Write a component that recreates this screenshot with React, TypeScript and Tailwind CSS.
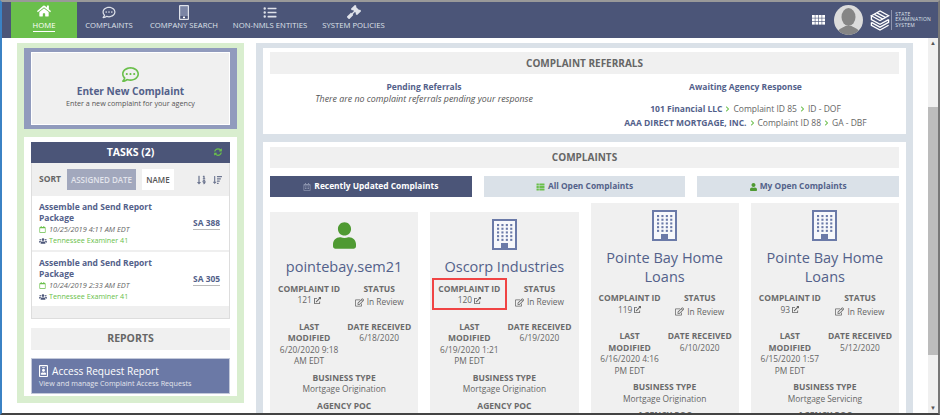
import { FaHome, FaRegCommentDots, FaListUl, FaGavel, FaSyncAlt, FaUsers, FaRegCalendar, FaRegCalendarAlt, FaUser, FaExternalLinkAlt, FaRegEdit, FaChevronRight, FaSortAmountDown, FaSortNumericDown, FaRegIdBadge, FaThList } from 'react-icons/fa';

const navItems = [
  { label: 'COMPLAINTS', icon: <FaRegCommentDots className="w-[14px] h-[13px]" />, w: 'w-[64px]' },
  { label: 'COMPANY SEARCH', icon: <TabletIcon />, w: 'w-[86px]' },
  { label: 'NON-NMLS ENTITIES', icon: <FaListUl className="w-[14px] h-[13px]" />, w: 'w-[86px]' },
  { label: 'SYSTEM POLICIES', icon: <FaGavel className="w-[14px] h-[14px]" />, w: 'w-[81px]' },
];

const complaints = [
  { name: 'pointebay.sem21', person: true, id: '121', modified: '6/20/2020 9:18 AM EDT', received: '6/18/2020', type: 'Mortgage Origination', boxed: false },
  { name: 'Oscorp Industries', person: false, id: '120', modified: '6/19/2020 1:21 PM EDT', received: '6/19/2020', type: 'Mortgage Origination', boxed: true },
  { name: 'Pointe Bay Home Loans', person: false, id: '119', modified: '6/16/2020 4:16 PM EDT', received: '6/10/2020', type: 'Mortgage Origination', boxed: false },
  { name: 'Pointe Bay Home Loans', person: false, id: '93', modified: '6/15/2020 1:57 PM EDT', received: '5/12/2020', type: 'Mortgage Servicing', boxed: false },
];

function TabletIcon() {
  return (
    <svg viewBox="0 0 10 15" className="w-[10px] h-[15px]">
      <rect x="0" y="0" width="10" height="15" rx="1" fill="#dfe2ea" />
      <rect x="1.2" y="1.2" width="7.6" height="9.8" fill="#7b85a5" />
      <rect x="1.2" y="11" width="7.6" height="2.8" fill="#4b5578" />
      <rect x="4" y="11.6" width="2" height="1.6" fill="#fff" />
    </svg>
  );
}

function GridIcon() {
  const cells = [];
  for (let r = 0; r < 3; r++) {
    for (let c = 0; c < 4; c++) {
      cells.push(<rect key={`${r}-${c}`} x={c * 3.4} y={r * 3.4} width="2.8" height="2.8" fill="#fff" />);
    }
  }
  return (
    <svg viewBox="0 0 13 10" className="w-[13px] h-[10px]">
      {cells}
    </svg>
  );
}

function Avatar() {
  return (
    <svg viewBox="0 0 29 30" className="w-[29px] h-[30px]">
      <defs>
        <clipPath id="avatar-clip">
          <ellipse cx="14.5" cy="15" rx="14.5" ry="15" />
        </clipPath>
      </defs>
      <g clipPath="url(#avatar-clip)">
        <rect width="29" height="30" fill="#dcdcdc" />
        <ellipse cx="14.5" cy="12" rx="7" ry="9" fill="#858585" />
        <path d="M3 30c0-6 5-7 8.500-9h6c3.500 2 8.500 3 8.500 9z" fill="#858585" />
      </g>
    </svg>
  );
}

function SesLogo() {
  return (
    <svg viewBox="0 0 20 22" className="w-[20px] h-[21px]" fill="none" stroke="#fff" strokeWidth="1.4">
      <path d="M1 6l9-5 9 5-9 5z" />
      <path d="M4 4.500l9 5M7 3l9 5" />
      <path d="M1 6v4l9 5 9-5" />
      <path d="M1 13l9 5 9-5v-3" />
      <path d="M1 13v3l9 5 9-5" />
    </svg>
  );
}

function BuildingIcon() {
  const dots = [];
  for (let r = 0; r < 5; r++) {
    for (let c = 0; c < 4; c++) {
      dots.push(<rect key={`${r}-${c}`} x={5 + c * 4.4} y={5 + r * 3.7} width="2.100" height="2.100" fill="#6b7aa8" />);
    }
  }
  return (
    <svg viewBox="0 0 25 31" className="w-[25px] h-[31px]">
      <rect x="1" y="1" width="23" height="29" fill="#f7f8fb" stroke="#6b7aa8" strokeWidth="2" />
      {dots}
      <rect x="9" y="24" width="7" height="6" fill="#6b7aa8" />
    </svg>
  );
}

function Field({ label, children }: { label: string; children: React.ReactNode }) {
  return (
    <div className="text-center text-[8.4px] leading-[11.5px] text-[#666]">
      <div className="font-bold text-[8.5px] text-[#6b6b6b]">{label}</div>
      {children}
    </div>
  );
}

function ComplaintCard({ c }: { c: (typeof complaints)[number] }) {
  return (
    <div className="flex-1 basis-0 min-w-0 bg-[#f0f0f0] pt-[7px] pb-10 px-[7px] text-center">
      <div className="flex justify-center h-[32px] items-start">
        {c.person ? <FaUser className="w-[23px] h-[27px] mt-[3px] text-[#4f9a32]" /> : <BuildingIcon />}
      </div>
      <div className="mt-[7px] text-[14.5px] leading-[18.5px] text-[#53618a]">{c.name}</div>
      <div className="grid grid-cols-2 gap-x-[6px] mt-[6px]">
        <div className="relative">
          {c.boxed && <div className="absolute -left-[5px] -top-[5px] w-[75px] h-[32px] border-2 border-[#f04444]" />}
          <Field label="COMPLAINT ID">
            <div className="flex items-center justify-center gap-[2px]">
              {c.id}
              <FaExternalLinkAlt className="w-[7px] h-[7px]" />
            </div>
          </Field>
        </div>
        <Field label="STATUS">
          <div className="mt-[2px] flex items-center justify-center gap-[3px]">
            <FaRegEdit className="w-[9px] h-[9px]" />
            In Review
          </div>
        </Field>
      </div>
      <div className="grid grid-cols-2 gap-x-[6px] mt-[13px]">
        <Field label="LAST MODIFIED">{c.modified}</Field>
        <Field label="DATE RECEIVED">{c.received}</Field>
      </div>
      <div className="mt-[5px]">
        <Field label="BUSINESS TYPE">{c.type}</Field>
      </div>
      <div className="mt-[5px]">
        <Field label="AGENCY POC">Tennessee Examiner 41</Field>
      </div>
    </div>
  );
}

function TaskRow({ date, code }: { date: string; code: string }) {
  return (
    <div className="bg-white flex items-center h-[54px] pl-[7px] pr-[9px] mb-[2px]">
      <div className="flex-1 pt-[1px]">
        <div className="text-[8.5px] leading-[11.5px] font-bold text-[#53618a] w-[125px]">Assemble and Send Report Package</div>
        <div className="flex items-center gap-[3px] text-[7.4px] leading-[11.5px] italic text-[#666]">
          <FaRegCalendar className="w-[7px] h-[7px] text-[#6abf4b]" />
          {date}
        </div>
        <div className="flex items-center gap-[2px] text-[7.2px] leading-[11px] text-[#6abf4b]">
          <FaUsers className="w-[8px] h-[8px] text-[#4b5578]" />
          Tennessee Examiner 41
        </div>
      </div>
      <span className="text-[8.4px] font-bold text-[#53618a] border-b border-[#bbb] leading-[12px]">{code}</span>
    </div>
  );
}

export default function App() {
  return (
    <div className="w-[940px] h-[415px] overflow-hidden flex flex-col bg-white border-t-[2px] border-b-[2px] border-t-[#999] border-b-[#444] border-l-[2px] border-l-[#3b82c4] border-r-[2px] border-r-[#777] font-['Open_Sans',sans-serif]">
      <header className="h-[36px] shrink-0 bg-[#4b5578] flex items-stretch pl-[9px] text-white">
        <div className="w-[66px] bg-[#6abf4b] flex flex-col items-center pt-[2px]">
          <FaHome className="w-[14px] h-[14px]" />
          <span className="text-[7.7px] leading-[10px] mt-[2px] border-b border-white pb-[1px]">HOME</span>
        </div>
        {navItems.map((n) => (
          <div key={n.label} className={`${n.w} flex flex-col items-center pt-[2px] text-[#dfe2ea]`}>
            <div className="h-[16px] flex items-center">{n.icon}</div>
            <span className="text-[7.7px] leading-[10px] whitespace-nowrap">{n.label}</span>
          </div>
        ))}
        <div className="flex-1" />
        <div className="flex items-center">
          <GridIcon />
          <div className="ml-[9px]"><Avatar /></div>
          <div className="ml-[7px]"><SesLogo /></div>
          <div className="ml-[1px] border-l border-[#8d94ad] pl-[3px] py-[2px] text-[5px] leading-[5.5px] text-[#dfe2ea] tracking-[0.2px] mr-[7px]">
            STATE<br />EXAMINATION<br />SYSTEM
          </div>
        </div>
      </header>

      <div className="flex-1 min-h-0 flex">
        <div className="flex-1 min-w-0 overflow-hidden flex items-start gap-[12px] pl-[15px] pt-[5px]">
          <aside className="w-[227px] shrink-0 h-[360px] bg-[#d9eecf] p-[7px] pt-[5px] flex flex-col gap-[8px]">
            <div className="h-[81px] bg-[#919bbd] py-[4px] px-[7px] shrink-0">
              <div className="h-full bg-[#f0f0f0] border border-white flex flex-col items-center pt-[13px]">
                <FaRegCommentDots className="w-[19px] h-[17px] text-[#6abf4b]" />
                <div className="text-[10.100px] leading-[14px] font-bold text-[#53618a] mt-[1px]">Enter New Complaint</div>
                <div className="text-[7.200px] leading-[11px] text-[#555]">Enter a new complaint for your agency</div>
              </div>
            </div>
            <div className="flex-1 bg-white px-[7px] pt-[5px]">
              <div className="relative h-[21px] bg-[#4b5578] text-white text-[10.5px] font-bold flex items-center justify-center">
                TASKS (2)
                <FaSyncAlt className="absolute right-[8px] top-[6px] w-[8px] h-[8px] text-[#6abf4b]" />
              </div>
              <div className="bg-[#efefef] border-x border-b border-[#ddd]">
                <div className="h-[33px] flex items-center pl-[7px] pr-[7px] text-[8.5px] font-bold text-[#666]">
                  <span>SORT</span>
                  <span className="ml-[6px] h-[21px] w-[69px] bg-[#a2a8bd] text-[#e3e5ec] font-semibold flex items-center justify-center whitespace-nowrap text-[8px]">ASSIGNED DATE</span>
                  <span className="ml-[6px] h-[21px] w-[32px] bg-white text-[#555] font-semibold flex items-center justify-center text-[8px]">NAME</span>
                  <FaSortNumericDown className="ml-auto w-[9px] h-[10px] text-[#6d7690]" />
                  <FaSortAmountDown className="ml-[7px] w-[9px] h-[10px] text-[#6d7690]" />
                </div>
                <TaskRow date="10/25/2019 4:11 AM EDT" code="SA 388" />
                <TaskRow date="10/24/2019 2:33 AM EDT" code="SA 305" />
                <div className="h-[10px]" />
              </div>
              <div className="mt-[9px] h-[22px] bg-[#f0f0f0] text-[#666] text-[10.5px] font-bold flex items-center justify-center">REPORTS</div>
              <div className="mt-[8px] h-[36px] bg-[#6b79a6] border border-[#c3c9da] px-[7px] text-white flex flex-col justify-center">
                <div className="flex items-center gap-[4px] text-[10.100px] leading-[14px]">
                  <FaRegIdBadge className="w-[9px] h-[12px]" />
                  Access Request Report
                </div>
                <div className="text-[7.200px] leading-[11px] text-[#e3e5ec]">View and manage Complaint Access Requests</div>
              </div>
            </div>
          </aside>

          <main className="flex-1 min-w-0 bg-[#dae1e8] p-[7px] pt-[5px] mr-[15px] flex flex-col gap-[8px]">
            <section className="h-[86px] shrink-0 bg-white px-[7px] pt-[4px]">
              <div className="h-[22px] bg-[#f0f0f0] text-[#666] text-[10px] font-bold flex items-center justify-center">COMPLAINT REFERRALS</div>
              <div className="flex mt-[7px] text-[8.500px] leading-[11.5px] text-center">
                <div className="w-[308px]">
                  <div className="font-bold text-[#53618a]">Pending Referrals</div>
                  <div className="italic text-[8.850px] text-[#555] pt-[1px]">There are no complaint referrals pending your response</div>
                </div>
                <div className="flex-1 pl-[14px]">
                  <div className="font-bold text-[#53618a]">Awaiting Agency Response</div>
                  <div className="mt-[9px] leading-[14px] text-[#666]">
                    <div className="flex items-center justify-center gap-[3px]">
                      <span className="font-bold text-[#53618a]">101 Financial LLC</span>
                      <FaChevronRight className="w-[5px] h-[6px] text-[#6abf4b]" />
                      Complaint ID 85
                      <FaChevronRight className="w-[5px] h-[6px] text-[#6abf4b]" />
                      ID - DOF
                    </div>
                    <div className="flex items-center justify-center gap-[3px]">
                      <span className="font-bold text-[#53618a]">AAA DIRECT MORTGAGE, INC.</span>
                      <FaChevronRight className="w-[5px] h-[6px] text-[#6abf4b]" />
                      Complaint ID 88
                      <FaChevronRight className="w-[5px] h-[6px] text-[#6abf4b]" />
                      GA - DBF
                    </div>
                  </div>
                </div>
              </div>
            </section>
            <section className="bg-white px-[7px] pt-[5px]">
              <div className="h-[21px] bg-[#f0f0f0] text-[#666] text-[10px] font-bold flex items-center justify-center">COMPLAINTS</div>
              <div className="grid grid-cols-3 gap-[12px] mt-[8px] text-[8.400px] font-bold">
                <div className="h-[21px] bg-[#4b5578] text-white flex items-center justify-center gap-[3px]">
                  <FaRegCalendarAlt className="w-[8px] h-[8px] text-[#8b93ad]" />
                  Recently Updated Complaints
                </div>
                <div className="h-[21px] bg-[#dae1e8] text-[#53618a] flex items-center justify-center gap-[3px]">
                  <FaThList className="w-[9px] h-[8px] text-[#6abf4b]" />
                  All Open Complaints
                </div>
                <div className="h-[21px] bg-[#dae1e8] text-[#53618a] flex items-center justify-center gap-[3px]">
                  <FaUser className="w-[7px] h-[8px] text-[#4f9a32]" />
                  My Open Complaints
                </div>
              </div>
              <div className="flex items-center gap-[12px] mt-[6px]">
                {complaints.map((c) => (
                  <ComplaintCard key={c.id} c={c} />
                ))}
              </div>
            </section>
          </main>
        </div>
        <div className="w-[10px] shrink-0 bg-[#f0f0f0] flex flex-col items-center">
          <div className="h-[10px] text-[6px] leading-[10px] text-[#555]">▲</div>
          <div className="mt-[59px] h-[248px] w-full bg-[#bcbcbc]" />
          <div className="mt-auto h-[10px] text-[6px] leading-[10px] text-[#555]">▼</div>
        </div>
      </div>
    </div>
  );
}
